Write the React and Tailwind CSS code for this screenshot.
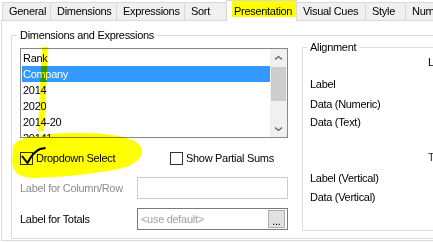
import React from "react";

const Tab = ({ label, w, first }) => (
  <div
    className={`h-[18px] bg-[#f0f0f0] border-t border-r border-[#d9d9d9] ${first ? "border-l" : ""} flex items-center pl-[6px] whitespace-nowrap shrink-0`}
    style={{ width: w }}
  >
    {label}
  </div>
);

const Chevron = ({ down }) => (
  <svg width="9" height="6" viewBox="0 0 9 6">
    <path
      d={down ? "M1 1.5 L4.5 4.5 L8 1.5" : "M1 4.5 L4.5 1.5 L8 4.5"}
      fill="none"
      stroke="#606060"
      strokeWidth="1.3"
    />
  </svg>
);

export default function App() {
  const items = ["Rank", "Company", "2014", "2020", "2014-20", "20141"];
  return (
    <div className="relative w-[433px] h-[242px] overflow-hidden bg-white font-['Liberation_Sans',Arial,sans-serif] text-[11px] leading-[13px] tracking-[-0.3px] text-black">
      {/* tab strip */}
      <div className="flex items-end h-[20px] pl-[2px] relative z-10">
        <Tab label="General" w={49} first />
        <Tab label="Dimensions" w={66} />
        <Tab label="Expressions" w={68} />
        <Tab label="Sort" w={42} />
        <div className="h-[21px] w-[71px] -ml-px mb-[-1px] bg-white border-t border-x border-[#d9d9d9] flex items-start pt-[4px] pl-[7px] shrink-0">
          Presentation
        </div>
        <Tab label="Visual Cues" w={69} />
        <Tab label="Style" w={40} />
        <Tab label="Number" w={53} />
      </div>

      {/* panel */}
      <div className="ml-px h-[221px] w-[450px] border-t border-l border-b border-[#d9d9d9] bg-white">
        <fieldset className="ml-[9px] mt-[8px] h-[210px] w-[440px] border border-[#dcdcdc]">
          <legend className="ml-[5px] px-[3px] leading-[13px]">Dimensions and Expressions</legend>
          <div className="flex items-start pl-[8px]">
            {/* left column */}
            <div className="w-[268px] mt-[6px] flex flex-col">
              <div className="h-[90px] border border-[#828790] bg-white flex overflow-hidden">
                <div className="flex-1 pt-[1px] pl-[1px] flex flex-col">
                  {items.map((it) => (
                    <div
                      key={it}
                      className={`h-[16px] shrink-0 flex items-center pl-[1px] ${it === "Company" ? "bg-[#3399ff] text-white" : ""}`}
                    >
                      {it}
                    </div>
                  ))}
                </div>
                <div className="w-[17px] bg-[#f0f0f0] flex flex-col items-center">
                  <div className="h-[17px] flex items-center justify-center">
                    <Chevron />
                  </div>
                  <div className="w-[15px] h-[34px] bg-[#cdcdcd] mt-px" />
                  <div className="flex-1" />
                  <div className="h-[17px] flex items-center justify-center">
                    <Chevron down />
                  </div>
                </div>
              </div>

              <div className="mt-[14px] h-[13px] flex items-center">
                <div className="w-[150px] flex items-center">
                  <div className="w-[13px] h-[13px] border border-[#333333] bg-white shrink-0" />
                  <span className="ml-[3px]">Dropdown Select</span>
                </div>
                <div className="flex items-center">
                  <div className="w-[13px] h-[13px] border border-[#333333] bg-white shrink-0" />
                  <span className="ml-[3px]">Show Partial Sums</span>
                </div>
              </div>

              <div className="mt-[12px] h-[22px] flex items-center">
                <div className="w-[117px] text-[#8d8d8d]">Label for Column/Row</div>
                <div className="w-[151px] h-[22px] border border-[#cccccc] bg-white" />
              </div>

              <div className="mt-[9px] h-[22px] flex items-center">
                <div className="w-[117px]">Label for Totals</div>
                <div className="w-[151px] h-[22px] border border-[#7a7a7a] bg-white flex items-center justify-between pl-[3px] pr-[2px]">
                  <span className="text-[#a0a0a0]">&lt;use default&gt;</span>
                  <div className="w-[17px] h-[18px] bg-[#e1e1e1] border border-[#adadad] flex items-end justify-center pb-[2px] leading-[8px]">
                    ...
                  </div>
                </div>
              </div>
            </div>

            {/* Alignment group */}
            <fieldset className="ml-[14px] mt-[-1px] w-[140px] h-[190px] border border-[#dcdcdc]">
              <legend className="ml-[4px] px-[3px] leading-[13px]">Alignment</legend>
              <div className="flex flex-col pl-[7px]">
                <div className="mt-[2px] ml-[118px]">L</div>
                <div className="mt-[9px]">Label</div>
                <div className="mt-[7px]">Data (Numeric)</div>
                <div className="mt-[5px]">Data (Text)</div>
                <div className="mt-[22px] ml-[118px] text-[#3a1a3a]">T</div>
                <div className="mt-[8px]">Label (Vertical)</div>
                <div className="mt-[6px]">Data (Vertical)</div>
              </div>
            </fieldset>
          </div>
        </fieldset>
      </div>

      {/* highlighter marks */}
      <svg
        className="absolute inset-0 pointer-events-none mix-blend-multiply z-20"
        width="433"
        height="242"
        viewBox="0 0 433 242"
      >
        <rect x="232" y="1" width="64" height="16" fill="#ffff00" />
        <path d="M42 47 L48 47 L44 131 L38 131 Z" fill="#ffff00" />
        <path
          d="M13 146 Q18 134 70 133 Q138 132 142 150 Q143 166 108 171 Q70 177 34 178 Q13 178 12 162 Z"
          fill="#ffff00"
        />
        <path
          d="M22 156 L27.5 163 Q33 152 40 149 L45.5 148"
          fill="none"
          stroke="#000"
          strokeWidth="2"
        />
      </svg>
    </div>
  );
}
